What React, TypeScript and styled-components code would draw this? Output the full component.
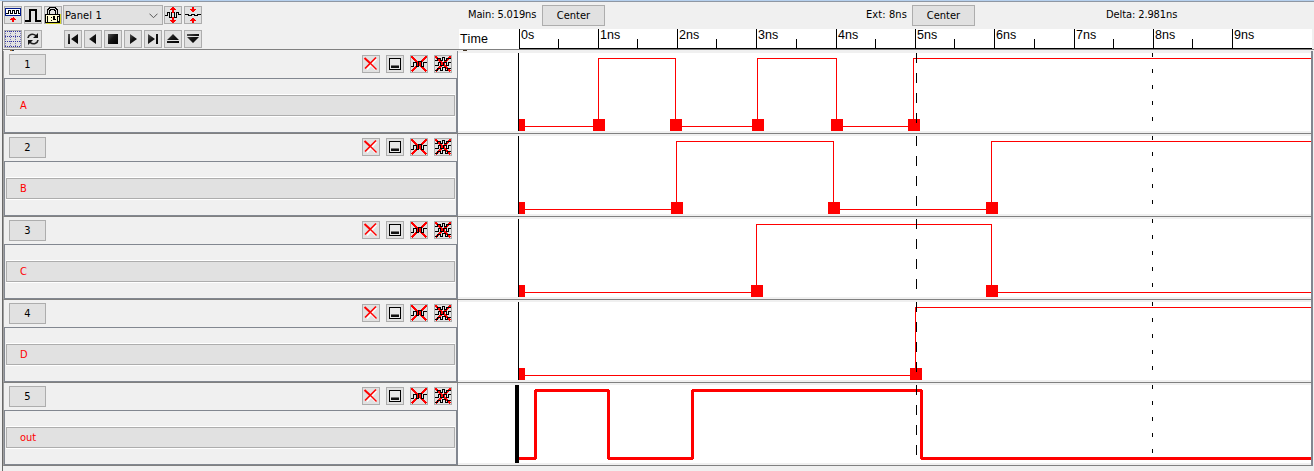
import React from "react";
import styled, { createGlobalStyle } from "styled-components";

const Global = createGlobalStyle`
  * { box-sizing: border-box; }
  html, body { margin: 0; background: #f0f0f0; overflow: hidden; }
  body { font: 11px/13px "DejaVu Sans Condensed", Tahoma, "DejaVu Sans", sans-serif; color: #000; }
  svg { display: block; flex: none; }
`;

const Window = styled.div`
  width: 1314px; height: 471px; background: #f0f0f0; border-top: 1px solid #b5d0ee;
  padding-left: 2px; display: flex; flex-direction: column;
`;
const Frame = styled.div`
  height: 470px; border-left: 1px solid #696969; border-top: 1px solid #8f97a3;
  display: flex; flex-direction: column;
`;
const Top = styled.div`
  display: flex; height: 48px; margin-bottom: 1px; border-bottom: 1px solid #808080;
  position: relative; flex: none;
`;
const Toolbar = styled.div`
  width: 455px; padding: 3px 0 0 1px; display: flex; flex-direction: column; gap: 5px;
`;
const ToolRow = styled.div<{ $h: number }>`
  display: flex; align-items: center; height: ${(p) => p.$h}px; gap: 2px; flex: none;
`;
const ToolButton = styled.button<{ $ml?: number }>`
  width: 18px; height: 18px; padding: 0; border: 0; flex: none;
  margin-left: ${(p) => p.$ml ?? 0}px; background: #e1e1e1;
  box-shadow: inset 0 0 0 1px #adadad;
`;
const Combo = styled.div`
  width: 100px; height: 20px; margin: 0 -1px; padding: 1px 4px 0 1px; flex: none;
  border: 1px solid #adadad; background: #e1e1e1; letter-spacing: 0.1px;
  display: flex; align-items: center; justify-content: space-between;
`;
const Right = styled.div`flex: 1; display: flex; flex-direction: column;`;
const Status = styled.div`
  height: 27px; padding: 3px 0 0 10px; display: flex; align-items: flex-start;
`;
const Readout = styled.span<{ $w: number; $s?: number }>`
  width: ${(p) => p.$w}px; line-height: 20px; white-space: nowrap; letter-spacing: ${(p) => p.$s ?? 0}px;
`;
const TextButton = styled.button<{ $w: number; $mr?: number }>`
  width: ${(p) => p.$w}px; height: 21px; margin: 0 ${(p) => p.$mr ?? 0}px 0 0; padding: 0;
  border: 1px solid #adadad; background: #e1e1e1; color: #000; font: inherit; line-height: 18px;
`;
const Row = styled.div`
  height: 83px; display: flex; border-left: 1px solid #a0a0a0; border-bottom: 1px solid #808080;
  border-right: 2px solid #828790; width: 1310px; flex: none;
`;
const Info = styled.div`width: 454px; display: flex; flex-direction: column; height: 82px;`;
const InfoHead = styled.div`
  height: 27px; padding: 3px 5px 0 5px; display: flex; justify-content: space-between;
  border-right: 1px solid #828790; flex: none;
`;
const RowIcons = styled.div`display: flex; gap: 6px; padding-top: 1px;`;
const List = styled.div`
  flex: 1; border: 1px solid #828790; border-right-width: 2px; padding: 15px 1px 0 1px;
`;
const Signal = styled.div`
  height: 23px; border-top: 1px solid #fff; border-bottom: 1px solid #fff;
`;
const SignalName = styled.div`
  height: 21px; border: 1px solid #adadad; background: #e1e1e1; color: #f00;
  padding-left: 13px; line-height: 19px;
`;
const Plot = styled.div`flex: 1; padding-top: 2px;`;
const Specks = styled.svg`position: absolute; left: 7px; top: 46px;`;

const Ic = ({ children }: { children: React.ReactNode }) => (
  <svg width="18" height="18" viewBox="0 0 18 18" fill="none" shapeRendering="crispEdges">{children}</svg>
);

const WavePanelIcon = () => (
  <Ic>
    <rect x="1.5" y="2.5" width="15" height="7" fill="#fff" stroke="#001a8c" />
    <path d="M2 7.5H4.5V4.5H6.5V7.5H8.5V4.5H10.5V7.5H12.5V4.5H14.5V7.5H16" stroke="#000" />
    <path d="M9 11h1v1h1v1h1v1h-2v2h-2v-2H6v-1h1v-1h2z" fill="#f00" />
  </Ic>
);
const PulseIcon = () => (
  <Ic><path d="M1 15H6V4H12V15H17" stroke="#000" strokeWidth="2" /></Ic>
);
const LockIcon = () => (
  <Ic>
    <path d="M4.5 8V4.5L6.5 2.5H10.5L12.5 4.5V8" stroke="#000" strokeWidth="3" />
    <path d="M4.5 8V4.5L6.5 2.5H10.5L12.5 4.5V8" stroke="#d9d9d9" />
    <rect x="1.5" y="8.5" width="14" height="8" fill="#fffbd0" stroke="#000" />
    <path d="M3.5 10v6M7 11.5h1M7 14.5h1M10.5 10v4M9.5 10v3.5h2M13 10.5h2v5h-2z" stroke="#000" />
    <path d="M16.5 8v9M2 17.5h15" stroke="#d6d62a" />
  </Ic>
);
const ExpandIcon = () => (
  <Ic>
    <path d="M1 9.5H3.5V6.5H5.5V11.5H7.5V6.5H10.5V11.5H12.5V6.5H14.5V8.5H17" stroke="#000" />
    <path d="M8 1h2v1h1v1h1v1h-2v3H8V4H6V3h1V2h1zM8 11h2v3h2v1h-1v1h-1v1H8v-1H7v-1H6v-1h2z" fill="#f00" />
  </Ic>
);
const CompressIcon = () => (
  <Ic>
    <path d="M1 8.5H4.5V9.5H7.5V8.5H10.5V9.5H13.5V8.5H17" stroke="#000" />
    <path d="M8 1h2v2h2v1h-1v1h-1v1H8V5H7V4H6V3h2zM8 12h2v1h1v1h1v1h-2v2H8v-2H6v-1h1v-1h1z" fill="#f00" />
  </Ic>
);
const GridIcon = () => (
  <Ic>
    <g stroke="#3030a0" strokeDasharray="1 1">
      <path d="M1 1.5H17M1 6.5H17M1 11.5H17M1 16.5H17" />
      <path d="M1.5 1V17M6.5 1V17M11.5 1V17M16.5 1V17" strokeOpacity=".6" />
    </g>
  </Ic>
);
const RefreshIcon = () => (
  <svg width="18" height="18" viewBox="0 0 18 18" fill="none">
    <path d="M4 8C4.5 4.5 8.5 3 12 5.6M14 10C13.5 13.5 9.5 15 6 12.4" stroke="#222" strokeWidth="1.7" />
    <path d="M14 3V8H9zM4 15V10H9z" fill="#111" />
  </svg>
);
const Media = ({ d }: { d: string }) => (
  <svg width="18" height="18" viewBox="0 0 18 18">
    <defs>
      <linearGradient id="ink" x1="0" y1="0" x2="1" y2="1">
        <stop offset="0" stopColor="#555" /><stop offset=".45" stopColor="#151515" /><stop offset="1" stopColor="#000" />
      </linearGradient>
    </defs>
    <path d={d} fill="url(#ink)" />
  </svg>
);
const CloseIcon = () => (
  <svg width="18" height="18" viewBox="0 0 18 18" fill="none">
    <path d="M5 14.5L14.5 4M9 10L14 15" stroke="#fff" strokeWidth="1.5" />
    <path d="M2.5 3L8.5 8.5" stroke="#f00" strokeWidth="2" />
    <path d="M8 8L14.5 14.5" stroke="#f00" strokeWidth="1.4" />
    <path d="M14 2.5L8 8.5L3 13.5" stroke="#f00" strokeWidth="1.6" />
  </svg>
);
const MinimizeIcon = () => (
  <Ic>
    <rect x="3.5" y="3.5" width="11" height="11" fill="#e8e8e8" stroke="#000" />
    <rect x="5" y="10" width="8" height="1" fill="#777" /><rect x="5" y="11" width="8" height="2" fill="#111" />
  </Ic>
);
const RemoveWaveIcon = () => (
  <Ic>
    <path d="M1.5 1.5L16.5 16.5M16.5 1.5L1.5 16.5" stroke="#f00" strokeWidth="2" />
    <path d="M1 11.5H3.5V7.5H6.5V11.5H8.5V6.5H11.5V11.5H13.5V7.5H17" stroke="#000" />
  </Ic>
);
const RemoveAllIcon = () => (
  <Ic>
    <path d="M1.5 1.5L16.5 16.5M16.5 1.5L1.5 16.5" stroke="#f00" strokeWidth="2" />
    <path d="M1 5.5H3.5V3.5H6.5V5.5H8.5V2.5H10.5V5.5H12.5V3.5H17M1 10.5H4.5V7.5H6.5V10.5H9.5V7.5H12.5V10.5H14.5V7.5H17M1 15.5H3.5V13.5H6.5V15.5H8.5V12.5H11.5V15.5H13.5V13.5H17" stroke="#000" />
  </Ic>
);

const MEDIA = [
  "M4 4h2v10H4zM14 4v10L7 9z",
  "M12 4v10L5 9z",
  "M4 4h10v10H4z",
  "M6 4v10L13 9z",
  "M4 4v10L11 9zM12 4h2v10h-2z",
  "M9 4L15 10H3zM3 11h12v2H3z",
  "M3 4h12v2H3zM3 7h12L9 13z",
];

/* Horizontal offsets below are measured from the plot's left edge (458). */
const TICKS = [61, 100, 140, 179, 219, 258, 298, 338, 378, 417, 457, 496, 536, 576, 616, 655, 695, 734, 774];

const RulerText = styled.g`
  font-family: "Liberation Sans", Arial, sans-serif;
  font-size: 12.5px;
`;

const Ruler = () => (
  <svg width="854" height="20" viewBox="0 0 854 20" shapeRendering="crispEdges">
    <rect x="1" width="853" height="20" fill="#fff" />
    <rect x="61" y="19" width="793" height="1" />
    {TICKS.map((x, i) => <rect key={x} x={x} y={i % 2 ? 10 : 0} width="1" height={i % 2 ? 10 : 20} />)}
    <RulerText>
      <text x="2" y="14" textLength="28">Time</text>
      {TICKS.filter((_, i) => i % 2 === 0).map((x, i) => (
        <text key={x} x={x + 2} y="10">{i ? `${i}ns` : "0s"}</text>
      ))}
    </RulerText>
  </svg>
);

type Sig = { name: string; edges: number[]; marks: number[]; bold?: boolean };
const SIGNALS: Sig[] = [
  { name: "A", edges: [140, 217, 299, 378, 455], marks: [135, 212, 294, 373, 450] },
  { name: "B", edges: [218, 375, 533], marks: [213, 370, 528] },
  { name: "C", edges: [298, 533], marks: [293, 528] },
  { name: "D", edges: [457], marks: [452] },
  { name: "out", edges: [77, 150, 234, 463], marks: [], bold: true },
];

const LOW = 73.5;
const HIGH = 5.5;

const Wave = ({ s }: { s: Sig }) => {
  let d = `M61 ${LOW}`;
  s.edges.forEach((x, i) => { d += `H${x + 0.5}V${i % 2 ? LOW : HIGH}`; });
  d += "H853";
  return (
    <svg width="853" height="78" viewBox="0 0 853 78" shapeRendering="crispEdges">
      <rect width="853" height="78" fill="#fff" />
      <rect x={s.bold ? 57 : 60} width={s.bold ? 4 : 1} height="78" />
      <path d={d} fill="none" stroke="#f00" strokeWidth={s.bold ? 3 : 1} strokeLinejoin="bevel" />
      {!s.bold && <rect x="61" y="66" width="6" height="12" fill="#f00" />}
      {s.marks.map((x) => <rect key={x} x={x} y="66" width="12" height="12" fill="#f00" />)}
      <path d="M458.5 0V70" stroke="#000" strokeDasharray="10 10" />
      <path d="M694.5 0V70" stroke="#000" strokeDasharray="4 12" />
    </svg>
  );
};

export default function App() {
  return (
    <>
      <Global />
      <Window>
        <Frame>
          <Top>
            <Toolbar>
              <ToolRow $h={20}>
                <ToolButton><WavePanelIcon /></ToolButton>
                <ToolButton><PulseIcon /></ToolButton>
                <ToolButton><LockIcon /></ToolButton>
                <Combo>
                  Panel 1
                  <svg width="9" height="6" viewBox="0 0 9 6" fill="none"><path d="M.5 .7L4.5 4.7L8.5 .7" stroke="#555" /></svg>
                </Combo>
                <ToolButton><ExpandIcon /></ToolButton>
                <ToolButton><CompressIcon /></ToolButton>
              </ToolRow>
              <ToolRow $h={18}>
                <ToolButton><GridIcon /></ToolButton>
                <ToolButton><RefreshIcon /></ToolButton>
                {MEDIA.map((d, i) => <ToolButton key={d} $ml={i ? 0 : 20}><Media d={d} /></ToolButton>)}
              </ToolRow>
            </Toolbar>
            <Right>
              <Status>
                <Readout $w={74} $s={-0.12}>Main: 5.019ns</Readout>
                <TextButton $w={63} $mr={261}>Center</TextButton>
                <Readout $w={46} $s={0.1}>Ext: 8ns</Readout>
                <TextButton $w={63} $mr={131}>Center</TextButton>
                <Readout $w={100} $s={-0.1}>Delta: 2.981ns</Readout>
              </Status>
              <Ruler />
            </Right>
            <Specks width="460" height="3" shapeRendering="crispEdges">
              <path d="M0 2h2v1H0z" fill="#a86a30" /><path d="M2 2h2v1H2z" fill="#234" />
              <path d="M453 2h4v1h-4z" fill="#432" />
            </Specks>
          </Top>
          {SIGNALS.map((s, i) => (
            <Row key={s.name}>
              <Info>
                <InfoHead>
                  <TextButton $w={37}>{i + 1}</TextButton>
                  <RowIcons>
                    <ToolButton><CloseIcon /></ToolButton>
                    <ToolButton><MinimizeIcon /></ToolButton>
                    <ToolButton><RemoveWaveIcon /></ToolButton>
                    <ToolButton><RemoveAllIcon /></ToolButton>
                  </RowIcons>
                </InfoHead>
                <List>
                  <Signal><SignalName>{s.name}</SignalName></Signal>
                </List>
              </Info>
              <Plot><Wave s={s} /></Plot>
            </Row>
          ))}
        </Frame>
      </Window>
    </>
  );
}
